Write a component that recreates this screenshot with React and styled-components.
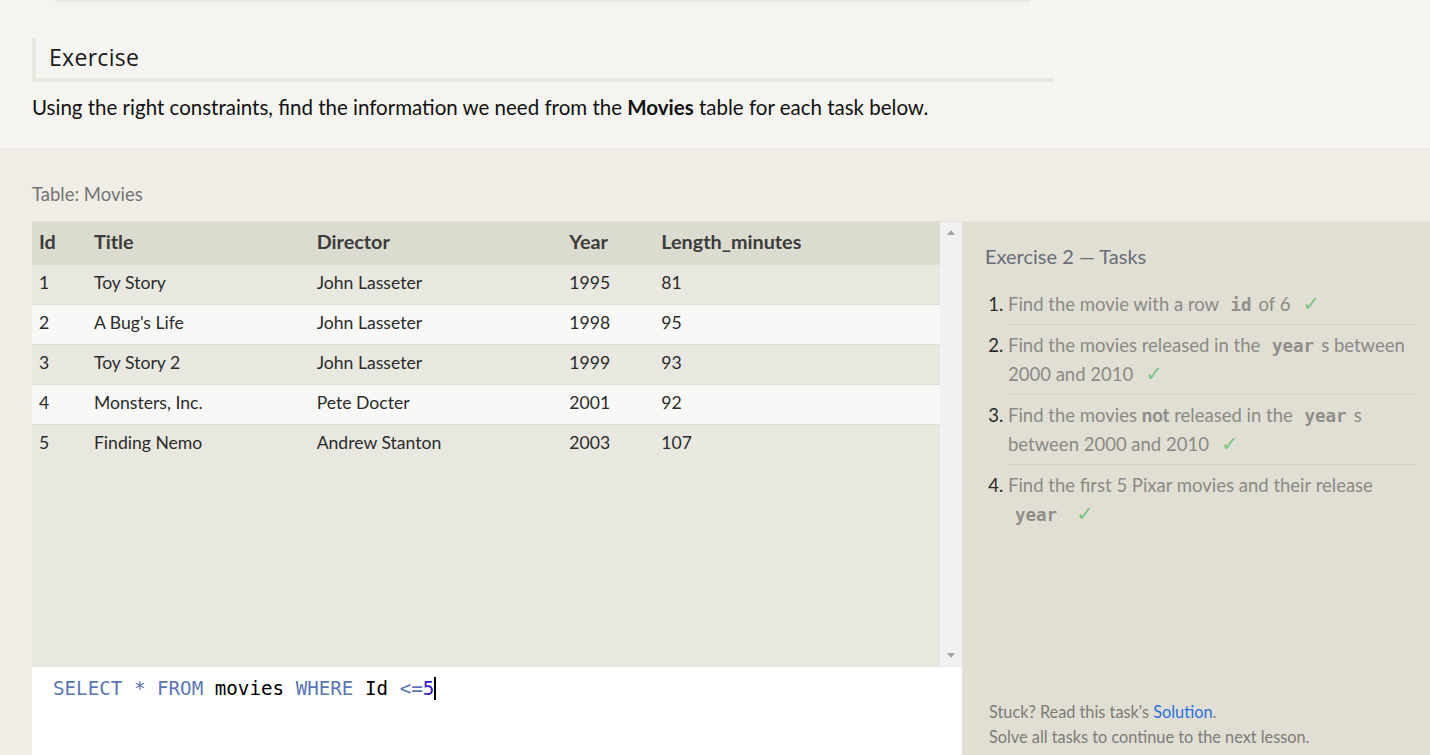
import React from "react";
import styled, { createGlobalStyle } from "styled-components";

const Global = createGlobalStyle`
  html, body { margin: 0; padding: 0; }
  body { background: #efede6; font-family: "Lato", "Open Sans", sans-serif; overflow: hidden; }
`;

const Page = styled.div`
  width: 1430px;
  height: 755px;
  display: flex;
  flex-direction: column;
  overflow: hidden;
`;

const Top = styled.section`
  background: #f5f4f0;
  height: 148px;
  box-sizing: border-box;
  padding: 0 0 0 32px;
  display: flex;
  flex-direction: column;
`;

const TopRule = styled.div`
  margin-left: 23px;
  width: 975px;
  height: 2px;
  background: #e9e8e1;
`;

const Heading = styled.h2`
  margin: 36px 0 0 0;
  width: 1022px;
  height: 44px;
  box-sizing: border-box;
  border-left: 4px solid #e9e8de;
  border-bottom: 4px solid #e9e8de;
  padding: 3px 0 0 13px;
  font-family: "Open Sans", sans-serif;
  font-weight: 400;
  font-size: 23px;
  color: #1a1a1a;
  letter-spacing: 0.3px;
`;

const Intro = styled.p`
  margin: 13px 0 0 0;
  font-size: 20.5px;
  color: #111;
  b { font-weight: 700; }
`;

const Lower = styled.section`
  flex: 1;
  display: flex;
  flex-direction: column;
  padding: 35px 0 0 32px;
`;

const Caption = styled.div`
  font-size: 18.5px;
  color: #737373;
  height: 38px;
`;

const Workspace = styled.div`
  flex: 1;
  display: flex;
`;

const LeftCol = styled.div`
  width: 930px;
  display: flex;
  flex-direction: column;
`;

const TableWrap = styled.div`
  height: 444px;
  display: flex;
  background: #e9e8e0;
  border-top: 1px solid #e2e1d9;
`;

const TableArea = styled.div`
  flex: 1;
`;

const Table = styled.table`
  width: 100%;
  border-collapse: collapse;
  font-size: 17.6px;
  color: #2b2b2b;
`;

const Th = styled.th`
  text-align: left;
  font-weight: 700;
  font-size: 19.8px;
  color: #3c3c3c;
  height: 38px;
  padding: 0 0 4px ${p => p.$pl || 0}px;
  width: ${p => p.$w}px;
  background: #dcdbd0;
`;

const Tr = styled.tr`
  background: ${p => (p.$even ? "#f8f8f6" : "#e9e8e0")};
  border-top: 1px solid #dedcd3;
`;

const Td = styled.td`
  height: 35px;
  padding: 0 0 4px ${p => p.$pl || 0}px;
`;

const Scrollbar = styled.div`
  width: 22px;
  background: #f1f1f1;
  display: flex;
  flex-direction: column;
  justify-content: space-between;
  align-items: center;
  padding: 8px 0;
  box-sizing: border-box;
`;

const Arrow = styled.div`
  width: 0;
  height: 0;
  border-left: 4px solid transparent;
  border-right: 4px solid transparent;
  ${p => (p.$down ? "border-top: 5px solid #a3a3a3;" : "border-bottom: 5px solid #a3a3a3;")}
`;

const Editor = styled.div`
  flex: 1;
  background: #fff;
  padding: 9px 0 0 21px;
  font-family: "DejaVu Sans Mono", "Liberation Mono", monospace;
  font-size: 19.2px;
  color: #000;
  border-top: 1px solid #e8e8e8;
  line-height: 26px;
`;

const Kw = styled.span`
  color: ${p => p.$c || "#5a76b6"};
`;

const Cursor = styled.span`
  display: inline-block;
  width: 2px;
  height: 23px;
  background: #000;
  vertical-align: -5px;
`;

const Panel = styled.aside`
  flex: 1;
  background: #e1dfd4;
  border-top: 1px solid #e6e5dc;
  padding: 22px 12px 0 23px;
  display: flex;
  flex-direction: column;
`;

const PanelTitle = styled.h3`
  margin: 0;
  font-weight: 400;
  font-size: 20px;
  color: #686d78;
`;

const TaskList = styled.ol`
  margin: 16px 0 0 0;
  padding: 0 0 0 23px;
  flex: 1;
`;

const Task = styled.li`
  font-size: 18.5px;
  line-height: 29px;
  color: #8b8a86;
  padding: 6px 0 5px 0;
  border-bottom: ${p => (p.$last ? "none" : "1px solid #d3d1c6")};
  &::marker { color: #2a2a2a; }
  b { font-weight: 700; }
`;

const Code = styled.code`
  font-family: "DejaVu Sans Mono", "Liberation Mono", monospace;
  font-weight: 700;
  font-size: 17.5px;
  line-height: 1;
  color: #8f8e89;
  margin: 0 7px;
`;

const Check = styled.span`
  color: #7cc486;
  margin-left: 12px;
  font-family: "DejaVu Sans", sans-serif;
  font-size: 21px;
  line-height: 1;
`;

const Footer = styled.div`
  font-size: 16.3px;
  line-height: 25px;
  color: #7d7b78;
  padding: 0 0 0 4px;
  margin-bottom: 6px;
  a { color: #2b6fe0; text-decoration: none; }
`;

const columns = [
  { key: "Id", w: 55, pl: 7 },
  { key: "Title", w: 223 },
  { key: "Director", w: 253 },
  { key: "Year", w: 92 },
  { key: "Length_minutes", w: 279 },
];

const rows = [
  [1, "Toy Story", "John Lasseter", 1995, 81],
  [2, "A Bug's Life", "John Lasseter", 1998, 95],
  [3, "Toy Story 2", "John Lasseter", 1999, 93],
  [4, "Monsters, Inc.", "Pete Docter", 2001, 92],
  [5, "Finding Nemo", "Andrew Stanton", 2003, 107],
];

export default function App() {
  return (
    <Page>
      <Global />
      <Top>
        <TopRule />
        <Heading>Exercise</Heading>
        <Intro>
          Using the right constraints, find the information we need from the <b>Movies</b> table for each task below.
        </Intro>
      </Top>
      <Lower>
        <Caption>Table: Movies</Caption>
        <Workspace>
          <LeftCol>
            <TableWrap>
              <TableArea>
                <Table>
                  <thead>
                    <tr>
                      {columns.map(c => (
                        <Th key={c.key} $w={c.w} $pl={c.pl}>{c.key}</Th>
                      ))}
                    </tr>
                  </thead>
                  <tbody>
                    {rows.map((r, i) => (
                      <Tr key={r[0]} $even={i % 2 === 1}>
                        {r.map((v, j) => (
                          <Td key={j} $pl={columns[j].pl}>{v}</Td>
                        ))}
                      </Tr>
                    ))}
                  </tbody>
                </Table>
              </TableArea>
              <Scrollbar>
                <Arrow />
                <Arrow $down />
              </Scrollbar>
            </TableWrap>
            <Editor>
              <Kw>SELECT</Kw> <Kw>*</Kw> <Kw>FROM</Kw> movies <Kw>WHERE</Kw> Id <Kw>&lt;=</Kw><Kw $c="#3a19c8">5</Kw><Cursor />
            </Editor>
          </LeftCol>
          <Panel>
            <PanelTitle>Exercise 2 — Tasks</PanelTitle>
            <TaskList>
              <Task>Find the movie with a row <Code>id</Code>of 6<Check>✓</Check></Task>
              <Task>Find the movies released in the <Code>year</Code>s between 2000 and 2010<Check>✓</Check></Task>
              <Task>Find the movies <b>not</b> released in the <Code>year</Code>s between 2000 and 2010<Check>✓</Check></Task>
              <Task $last>Find the first 5 Pixar movies and their release <Code>year</Code><Check>✓</Check></Task>
            </TaskList>
            <Footer>
              Stuck? Read this task's <a href="#">Solution</a>.<br />
              Solve all tasks to continue to the next lesson.
            </Footer>
          </Panel>
        </Workspace>
      </Lower>
    </Page>
  );
}
